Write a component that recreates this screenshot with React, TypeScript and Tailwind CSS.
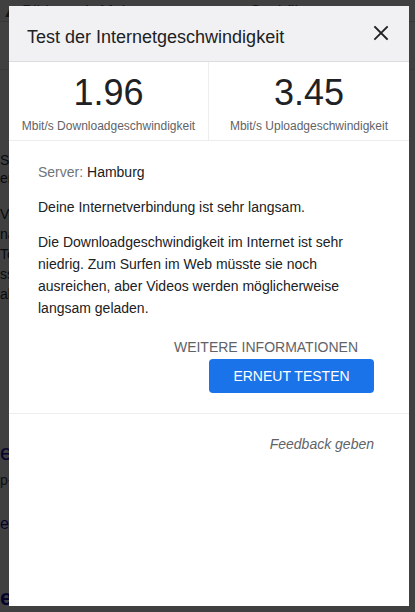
export default function App() {
  const leftBits = [
    { t: "Se", top: 150 },
    { t: "er", top: 168 },
    { t: "Ve", top: 204 },
    { t: "na", top: 224 },
    { t: "Te", top: 244 },
    { t: "ss", top: 264 },
    { t: "al", top: 284 },
  ];

  return (
    <div className="relative w-[415px] h-[612px] overflow-hidden bg-white font-['Liberation_Sans',Arial,sans-serif]">
      {/* page behind the dialog */}
      <div className="absolute inset-0">
        <div className="flex items-end h-[22px] border-b border-gray-300 text-[16px] text-gray-600 pl-[2px]">
          <span className="leading-[18px]">▲ Bilder</span>
          <span className="ml-[16px] leading-[18px]">⋮ Mehr</span>
          <span className="ml-[114px] leading-[18px]">Suchfilter</span>
        </div>
        <div className="h-[48px] border-b border-gray-200"></div>
        {leftBits.map((b) => (
          <div key={b.top} className="absolute left-0 text-[14px] text-gray-800" style={{ top: b.top }}>
            {b.t}
          </div>
        ))}
        <div className="absolute left-0 top-[436px] text-[22px] text-[#1a0dab]">e</div>
        <div className="absolute left-0 top-[470px] text-[14px] text-gray-700">p-</div>
        <div className="absolute left-0 top-[512px] text-[16px] text-[#1a0dab]">e</div>
        <div className="absolute left-0 top-[586px] text-[22px] leading-[24px] font-bold text-[#1a0dab]">esse?</div>
      </div>
      <div className="absolute inset-0 bg-black/75"></div>

      {/* dialog */}
      <div className="absolute left-[9px] top-[6px] w-[400px] h-[600px] bg-white flex flex-col">
        <div className="h-[56px] bg-[#f1f1f3] border-b border-[#dcdcde] flex items-center justify-between pl-[18px] pr-[20px]">
          <h1 className="text-[18px] text-[#202124] pt-[7px]">Test der Internetgeschwindigkeit</h1>
          <svg width="16" height="16" viewBox="0 0 16 16" className="mt-[-2px]">
            <path d="M2 2 L14 14 M14 2 L2 14" stroke="#202124" strokeWidth="1.8" strokeLinecap="square" />
          </svg>
        </div>

        <div className="grid grid-cols-2 h-[79px] border-b border-[#ededed]">
          <div className="flex flex-col items-center pt-[12px] border-r border-[#ededed]">
            <div className="text-[36px] leading-[38px] text-[#202124]">1.96</div>
            <div className="text-[12px] text-[#5f6368] mt-[5px]">Mbit/s Downloadgeschwindigkeit</div>
          </div>
          <div className="flex flex-col items-center pt-[12px]">
            <div className="text-[36px] leading-[38px] text-[#202124]">3.45</div>
            <div className="text-[12px] text-[#5f6368] mt-[5px]">Mbit/s Uploadgeschwindigkeit</div>
          </div>
        </div>

        <div className="pl-[29px] pr-[35px] pt-[21px] text-[14px] text-[#202124]">
          <p className="leading-[20px]">
            <span className="text-[#70757a]">Server:</span> Hamburg
          </p>
          <p className="leading-[20px] mt-[15px]">Deine Internetverbindung ist sehr langsam.</p>
          <p className="leading-[22px] mt-[14px]">
            Die Downloadgeschwindigkeit im Internet ist sehr niedrig. Zum Surfen im Web müsste sie noch ausreichen, aber
            Videos werden möglicherweise langsam geladen.
          </p>
          <div className="flex flex-col items-end mt-[18px]">
            <div className="text-[14px] leading-[20px] text-[#5f6368] mr-[16px]">WEITERE INFORMATIONEN</div>
            <button className="mt-[2px] w-[165px] h-[34px] rounded-[4px] bg-[#1a73e8] text-white text-[14px] font-medium">
              ERNEUT TESTEN
            </button>
          </div>
        </div>

        <div className="mt-[20px] border-t border-[#ededed] pr-[35px] pt-[18px] text-right">
          <span className="italic text-[14px] text-[#5f6368]">Feedback geben</span>
        </div>
      </div>
    </div>
  );
}
